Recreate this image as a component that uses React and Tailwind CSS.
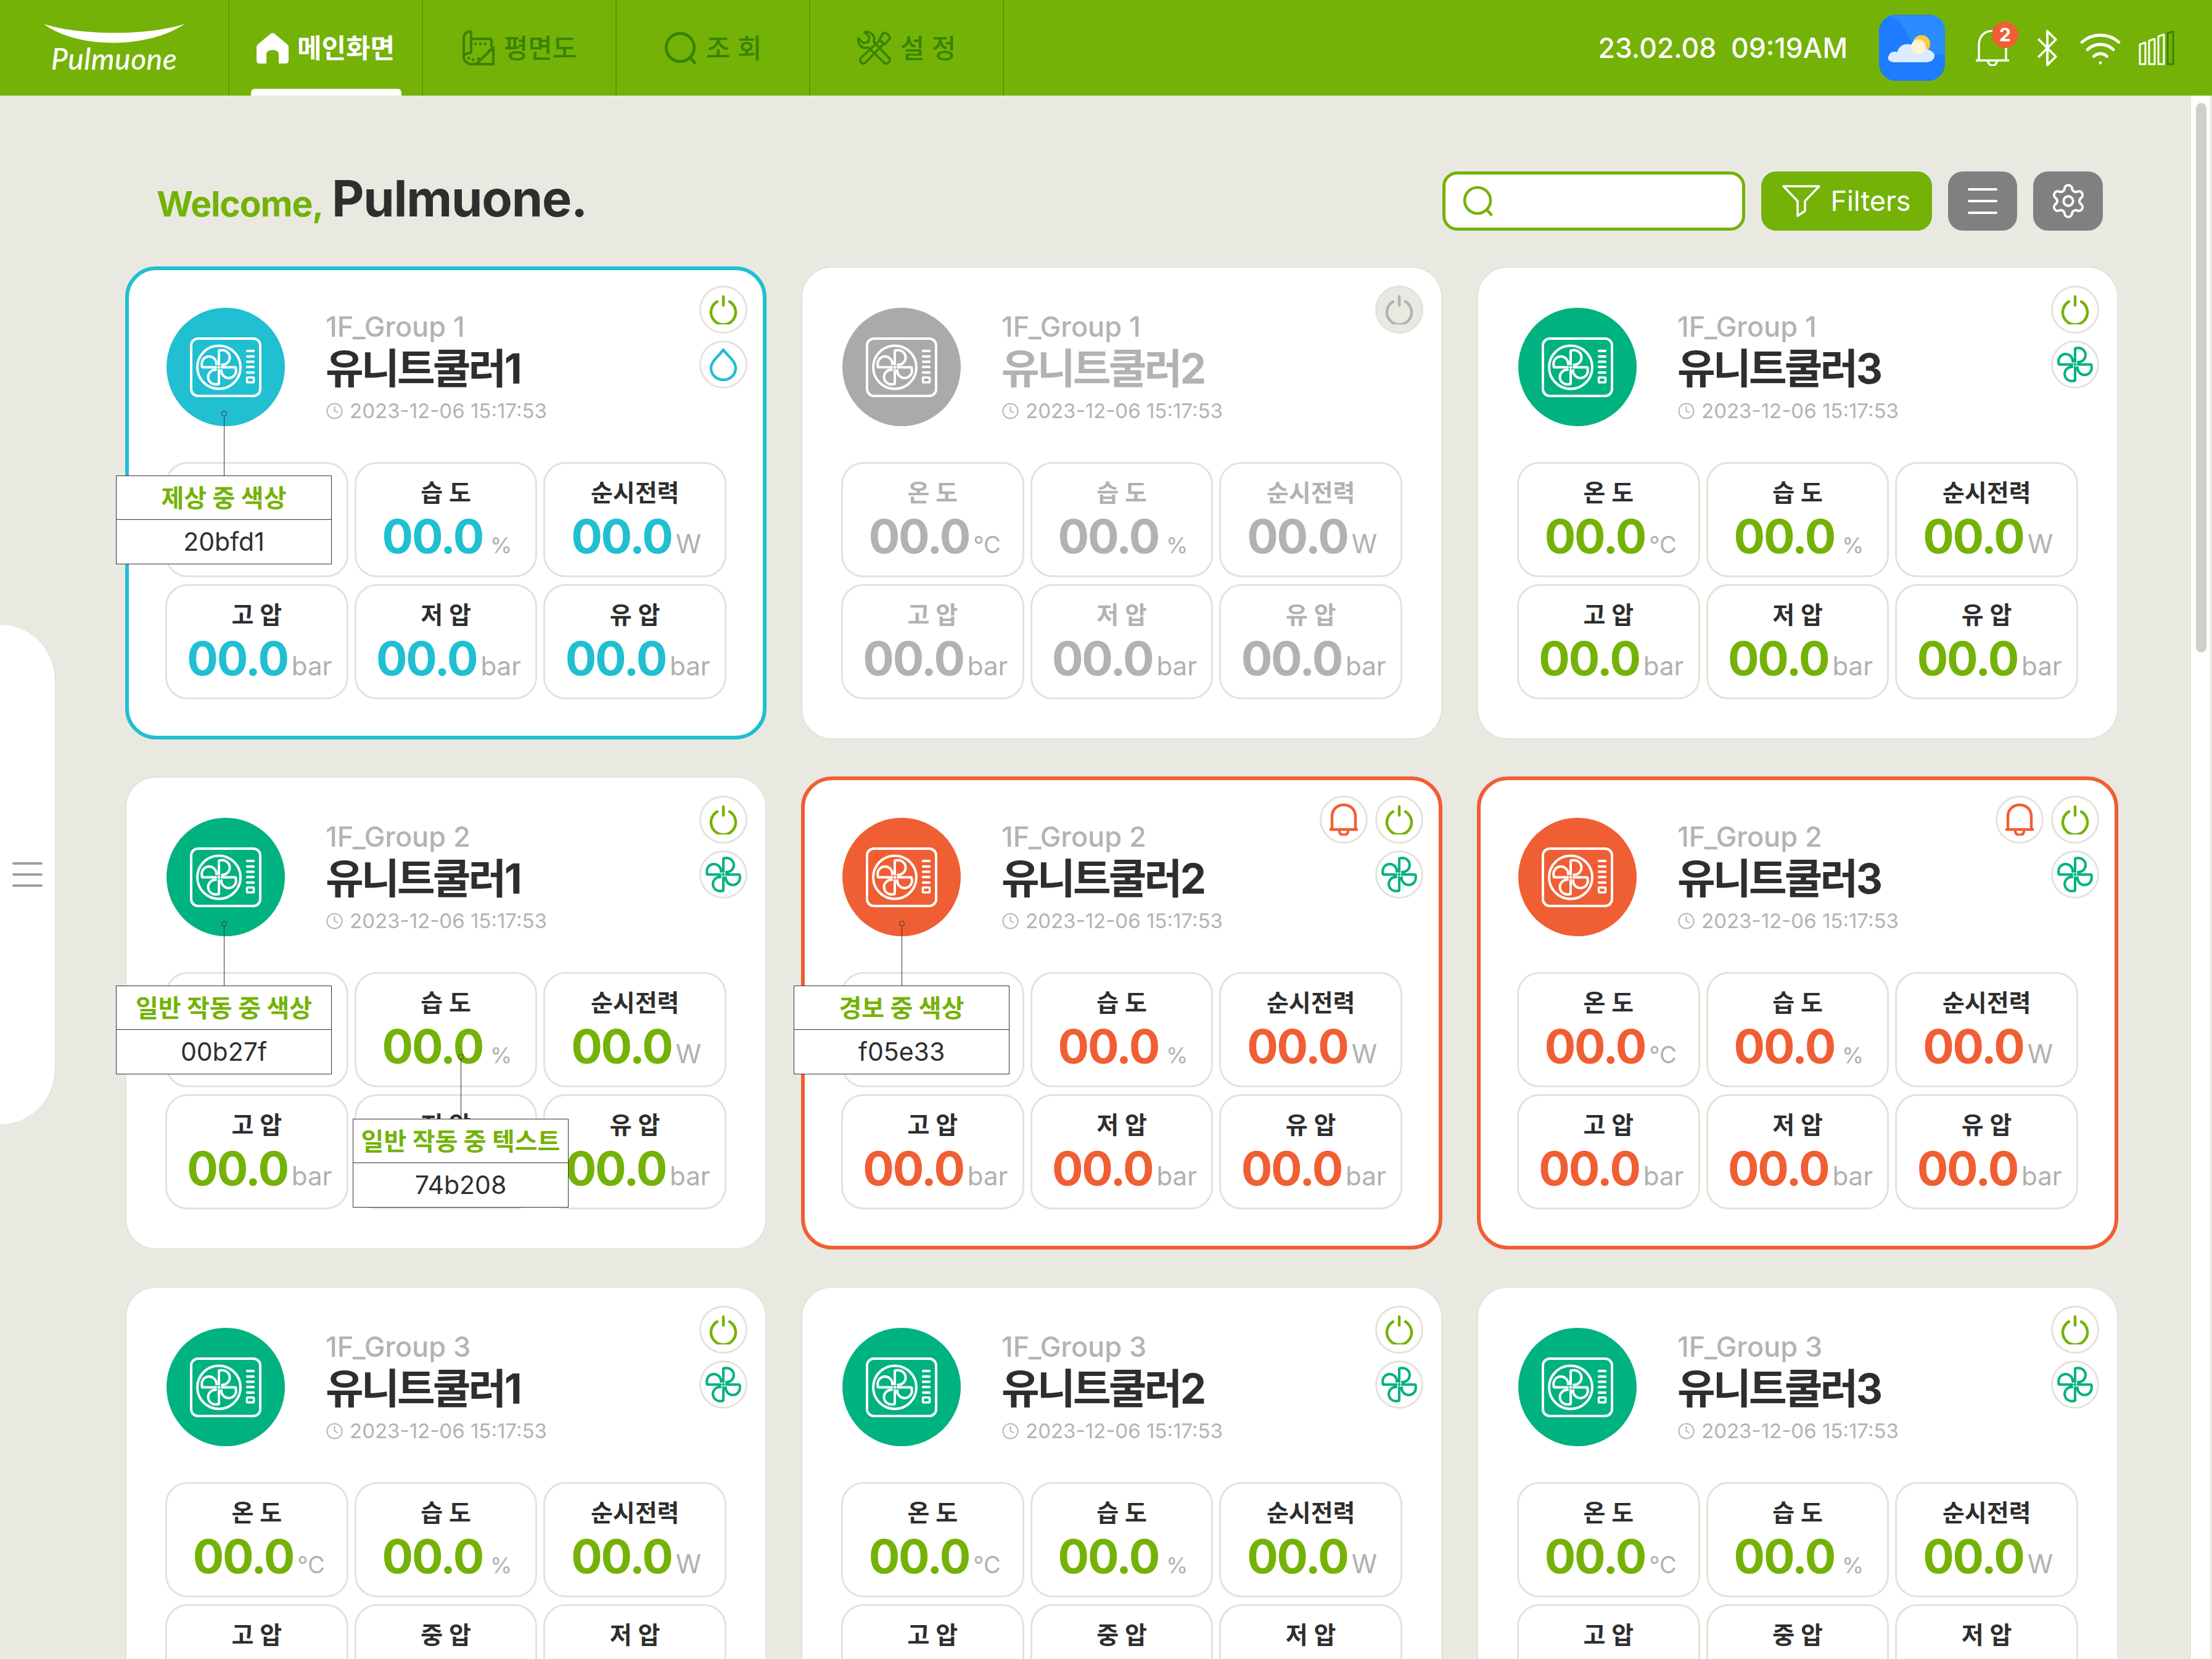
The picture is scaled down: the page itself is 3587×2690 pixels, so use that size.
import React from 'react';
import { Settings, Clock, Bluetooth, Wifi } from 'lucide-react';

const tones = {
  cyan: {
    card: 'border-[6px] border-[#20bfd1] pt-[61px] pl-[59px]',
    btns: 'top-[25px] right-[25px]',
    circle: 'bg-[#20bfd1]',
    value: 'text-[#20bfd1]',
    label: 'text-[#2e2e2e]',
    title: 'text-[#2e2e2e]',
  },
  green: {
    card: 'border-2 border-[#e3e3d8] pt-[65px] pl-[63px]',
    btns: 'top-[29px] right-[29px]',
    circle: 'bg-[#00b27f]',
    value: 'text-[#74b208]',
    label: 'text-[#2e2e2e]',
    title: 'text-[#2e2e2e]',
  },
  red: {
    card: 'border-[6px] border-[#f05e33] pt-[61px] pl-[59px]',
    btns: 'top-[25px] right-[25px]',
    circle: 'bg-[#f05e33]',
    value: 'text-[#f05e33]',
    label: 'text-[#2e2e2e]',
    title: 'text-[#2e2e2e]',
  },
  off: {
    card: 'border-2 border-[#e3e3d8] pt-[65px] pl-[63px]',
    btns: 'top-[29px] right-[29px]',
    circle: 'bg-[#aaaaaa]',
    value: 'text-[#b2b2b2]',
    label: 'text-[#b2b2b2]',
    title: 'text-[#b2b2b2]',
  },
};

const unitStyles = {
  '°C': { row: 'ml-[7px]', text: 'text-[38px]' },
  '%': { row: 'ml-[4px]', text: 'ml-[6px] text-[36px]' },
  W: { row: 'ml-[4px]', text: 'text-[42px]' },
  bar: { row: 'ml-[9px]', text: 'text-[42px]' },
};

const metricsA = [
  { label: '온 도', unit: '°C' },
  { label: '습 도', unit: '%' },
  { label: '순시전력', unit: 'W' },
  { label: '고 압', unit: 'bar' },
  { label: '저 압', unit: 'bar' },
  { label: '유 압', unit: 'bar' },
];

const metricsB = [
  { label: '온 도', unit: '°C' },
  { label: '습 도', unit: '%' },
  { label: '순시전력', unit: 'W' },
  { label: '고 압', unit: 'bar' },
  { label: '중 압', unit: 'bar' },
  { label: '저 압', unit: 'bar' },
];

const cards = [
  { group: '1F_Group 1', name: '유니트쿨러1', tone: 'cyan', second: 'drop' },
  { group: '1F_Group 1', name: '유니트쿨러2', tone: 'off' },
  { group: '1F_Group 1', name: '유니트쿨러3', tone: 'green', second: 'fan' },
  { group: '1F_Group 2', name: '유니트쿨러1', tone: 'green', second: 'fan' },
  { group: '1F_Group 2', name: '유니트쿨러2', tone: 'red', second: 'fan', bell: true },
  { group: '1F_Group 2', name: '유니트쿨러3', tone: 'red', second: 'fan', bell: true },
  { group: '1F_Group 3', name: '유니트쿨러1', tone: 'green', second: 'fan', metrics: metricsB },
  { group: '1F_Group 3', name: '유니트쿨러2', tone: 'green', second: 'fan', metrics: metricsB },
  { group: '1F_Group 3', name: '유니트쿨러3', tone: 'green', second: 'fan', metrics: metricsB },
];

const Petals = ({ sw = 4 }) => (
  <g fill="none" stroke="currentColor" strokeWidth={sw} strokeLinejoin="round" strokeLinecap="round">
    {[0, 90, 180, 270].map((r) => (
      <path key={r} transform={`rotate(${r})`} d="M0 -5V-26Q0 -28 3 -27.5A11.9 11.9 0 1 1 5 -4" />
    ))}
    <circle r="1.5" strokeWidth="2" />
  </g>
);

const FanIcon = () => (
  <svg width="58" height="58" viewBox="-30 -30 60 60" className="text-[#00b27f]">
    <Petals sw={4.2} />
  </svg>
);

const UnitIcon = () => (
  <svg width="118" height="99" viewBox="0 0 118 99" className="text-white">
    <rect x="3" y="3" width="112" height="93" rx="11" fill="none" stroke="currentColor" strokeWidth="4" />
    <circle cx="48" cy="49.5" r="35" fill="none" stroke="currentColor" strokeWidth="4" />
    <g transform="translate(48 49.5)">
      <Petals sw={4} />
    </g>
    <g fill="currentColor">
      <rect x="92" y="21" width="14" height="4" rx="1.5" />
      <rect x="92" y="30" width="14" height="4" rx="1.5" />
      <rect x="92" y="38.5" width="14" height="4" rx="1.5" />
      <rect x="92" y="47" width="14" height="4" rx="1.5" />
      <rect x="92" y="56" width="14" height="4" rx="1.5" />
    </g>
    <rect x="93.5" y="66" width="11" height="8" rx="1" fill="none" stroke="currentColor" strokeWidth="3.5" />
  </svg>
);

const PowerIcon = ({ off }) => (
  <svg width="46" height="48" viewBox="0 0 46 48" fill="none" stroke="currentColor" strokeWidth="4.4" strokeLinecap="round" className={off ? 'text-[#b2b2b2]' : 'text-[#74b208]'}>
    <path d="M13 11A20 20 0 1 0 33 11" />
    <path d="M23 3V17" />
  </svg>
);

const DropIcon = () => (
  <svg width="46" height="54" viewBox="0 0 46 54" fill="none" stroke="#20bfd1" strokeWidth="4.4" strokeLinejoin="round">
    <path d="M23 3C28 11 43 21 43 33A20 19 0 0 1 3 33C3 21 18 11 23 3Z" />
  </svg>
);

const BellIcon = () => (
  <svg width="46" height="52" viewBox="0 0 46 52" fill="none" stroke="#f05e33" strokeWidth="4.4" strokeLinecap="round">
    <path d="M4 42V21C4 10 12 2 23 2C34 2 42 10 42 21V42" />
    <path d="M1 42H45" />
    <path d="M16 45A7 6 0 0 0 30 45" />
  </svg>
);

const RoundBtn = ({ children, off }) => (
  <div className={`flex items-center justify-center w-[78px] h-[78px] rounded-full border-[3px] border-[#e3e3d8] ${off ? 'bg-[#e9e9e1]' : 'bg-white'}`}>
    {children}
  </div>
);

const Metric = ({ label, unit, tone }) => (
  <div className="flex flex-col items-center h-[187px] pt-[24px] rounded-[36px] border-[3px] border-[#e3e3d8]">
    <div className={`h-[46px] leading-[46px] text-[39px] font-semibold ${tone.label}`}>{label}</div>
    <div className={`mt-[8px] flex items-baseline justify-center gap-[6px] h-[80px] leading-[80px] ${unitStyles[unit].row}`}>
      <span className={`text-[75px] font-bold tracking-[-0.03em] ${tone.value}`}>00.0</span>
      <span className={`${unitStyles[unit].text} text-[#b0b0b0]`}>{unit}</span>
    </div>
  </div>
);

const Annotation = ({ className, title, value, stem = 'h-[96px]' }) => (
  <div className={`absolute z-10 flex flex-col items-center w-[350px] ${className}`}>
    <div className="w-[9px] h-[9px] rounded-full border-[1.5px] border-[#333333]" />
    <div className={`w-px bg-[#333333] ${stem}`} />
    <div className="w-full h-[144px] bg-white border-[1.5px] border-[#333333] flex flex-col">
      <div className="h-[71px] pt-[2px] flex items-center justify-center text-[#74b208] text-[40px] font-bold border-b-[1.5px] border-[#333333] whitespace-nowrap">{title}</div>
      <div className="flex-1 flex items-center justify-center text-[#2e2e2e] text-[41px]">{value}</div>
    </div>
  </div>
);

const Card = ({ group, name, tone, second, bell, metrics = metricsA, children }) => {
  const t = tones[tone];
  const off = tone === 'off';
  return (
    <div className={`relative h-[767px] bg-white rounded-[50px] ${t.card}`}>
      <div className="flex ml-[2px]">
        <div className={`flex items-center justify-center w-[192px] h-[192px] rounded-full ${t.circle}`}>
          <UnitIcon />
        </div>
        <div className="ml-[66px] pt-[8px]">
          <div className="h-[46px] leading-[46px] text-[45px] font-medium text-[#b3b3b3]">{group}</div>
          <div className={`mt-[6px] h-[78px] leading-[78px] text-[67px] font-bold tracking-[-0.055em] ${t.title}`}>{name}</div>
          <div className="mt-[5px] flex items-center gap-[10px] text-[33px] text-[#b3b3b3]">
            <Clock size={29} strokeWidth={1.6} />
            <span>2023-12-06 15:17:53</span>
          </div>
        </div>
      </div>
      <div className={`absolute flex flex-col items-end gap-[11px] ${t.btns}`}>
        <div className="flex gap-[12px]">
          {bell && <RoundBtn><BellIcon /></RoundBtn>}
          <RoundBtn off={off}><PowerIcon off={off} /></RoundBtn>
        </div>
        {second === 'fan' && <RoundBtn><FanIcon /></RoundBtn>}
        {second === 'drop' && <RoundBtn><DropIcon /></RoundBtn>}
      </div>
      <div className="mt-[57px] w-[910px] grid grid-cols-3 gap-x-[10px] gap-y-[11px]">
        {metrics.map((m) => (
          <Metric key={m.label} label={m.label} unit={m.unit} tone={t} />
        ))}
      </div>
      {children}
    </div>
  );
};

const NavItem = ({ icon, label, active }) => (
  <div className="relative w-[314px] h-full flex items-center justify-center gap-[14px] border-r-2 border-[#5c9a06]">
    {icon}
    <span className={`pt-[2px] text-[43px] font-bold ${active ? 'text-white' : 'font-medium text-[#388400]'}`}>{label}</span>
    {active && <div className="absolute bottom-0 left-[35px] w-[244px] h-[11px] bg-white rounded-t-[6px]" />}
  </div>
);

const HomeIcon = () => (
  <svg width="52" height="50" viewBox="0 0 52 50" fill="#ffffff">
    <path d="M23 1.5Q26 -0.5 29 1.5L50 19Q52 21 52 24V45Q52 50 47 50H36V36Q36 28 26 28Q16 28 16 36V50H5Q0 50 0 45V24Q0 21 2 19Z" />
  </svg>
);

const PlanIcon = () => (
  <svg width="54" height="58" viewBox="0 0 54 58" fill="none" stroke="#388400" strokeWidth="4" strokeLinecap="round" strokeLinejoin="round">
    <path d="M3 40V14Q3 3 13 2Q15 2 15 5V36Q5 38 3 42Q2 50 12 55H51V28L24 54" />
    <path d="M15 14H46Q48 14 48 16V26" />
    <path d="M22 22H22.1M30 22H30.1M38 22H38.1M44 33H44.1M11 45H11.1M18 48H18.1M27 46H27.1" strokeWidth="4.5" />
  </svg>
);

const SearchIcon = ({ color, size }) => (
  <svg width={size} height={size} viewBox="0 0 50 50" fill="none" stroke={color} strokeWidth="4.5" strokeLinecap="round">
    <circle cx="24" cy="24" r="21" />
    <path d="M39 39L46 47" />
  </svg>
);

const ToolIcon = () => (
  <svg width="56" height="56" viewBox="0 0 56 56" fill="none" stroke="#388400" strokeWidth="3.6" strokeLinejoin="round">
    <path d="M12 2L20 10L18 18L10 20L2 12C0 22 8 30 18 27L44 52C48 56 56 48 52 44L27 18C30 8 22 0 12 2Z" />
    <path d="M42 4C46 0 56 10 52 14L44 22L36 14Z" />
    <path d="M36 16L6 44C2 48 8 56 13 52L42 22" />
  </svg>
);

const WeatherIcon = () => (
  <svg width="107" height="107" viewBox="0 0 107 107">
    <rect width="107" height="107" rx="27" fill="#1f7bff" />
    <path d="M14 1H80Q107 1 107 27V64C90 66 72 68 56 48C44 32 40 8 14 1Z" fill="#2b8cff" />
    <circle cx="69" cy="47" r="14" fill="#ffc93c" />
    <path d="M26 77C16 77 12 71 16 66C18 60 23 59 30 60C32 50 42 46 50 48C56 50 62 48 70 54C80 55 90 60 90 66C90 73 84 77 76 77Z" fill="#dcebff" />
    <circle cx="64" cy="52" r="12" fill="#fff3d8" />
  </svg>
);

const SignalIcon = () => (
  <svg width="58" height="56" viewBox="0 0 58 56" fill="none" strokeWidth="3" strokeLinejoin="round">
    <path d="M2 22L11 19V54H2Z" stroke="#ffffff" />
    <path d="M17 16L26 13V54H17Z" stroke="#ffffff" />
    <path d="M32 9L41 6V54H32Z" stroke="#ffffff" />
    <path d="M47 4L56 1V54H47Z" stroke="#388400" />
  </svg>
);

const App = () => (
  <div className="w-[3587px] h-[2690px] overflow-hidden relative flex flex-col bg-[#e9e9e1] font-['Inter','Noto_Sans_CJK_KR',sans-serif]">
    <header className="flex items-stretch h-[155px] bg-[#74b208] shrink-0">
      <div className="w-[372px] flex flex-col items-center pt-[39px] border-r-2 border-[#5c9a06]">
        <svg width="228" height="31" viewBox="0 0 228 31" fill="#ffffff">
          <path d="M0 0C60 19 168 19 228 0C170 40 55 41 0 0Z" />
        </svg>
        <span className="-mt-[5px] text-white text-[48px] italic font-medium font-['Lato',sans-serif] tracking-[0.01em] leading-[60px]">Pulmuone</span>
      </div>
      <NavItem active icon={<HomeIcon />} label="메인화면" />
      <NavItem icon={<PlanIcon />} label="평면도" />
      <NavItem icon={<SearchIcon color="#388400" size={54} />} label="조 회" />
      <NavItem icon={<ToolIcon />} label="설 정" />
      <div className="flex-1 flex items-center justify-end pr-[61px]">
        <span className="mt-[2px] text-white text-[44.5px] font-medium mr-[51px] whitespace-pre">23.02.08  09:19AM</span>
        <WeatherIcon />
        <div className="relative ml-[50px] w-[54px] h-[58px]">
          <svg width="54" height="58" viewBox="0 0 54 58" fill="none" stroke="#ffffff" strokeWidth="3.5" strokeLinecap="round">
            <path d="M5 49V24C5 10 14 1 27 1C40 1 49 10 49 24V49" />
            <path d="M1 49H53" />
            <path d="M20 51A7 6 0 0 0 34 51" />
          </svg>
          <div className="absolute -top-[14px] left-[26px] w-[43px] h-[43px] rounded-full bg-[#f05e33] flex items-center justify-center text-white text-[30px] font-bold">2</div>
        </div>
        <Bluetooth className="ml-[29px] text-white" size={66} strokeWidth={1.4} />
        <Wifi className="ml-[17px] text-white" size={72} strokeWidth={1.6} />
        <div className="ml-[26px]"><SignalIcon /></div>
      </div>
    </header>

    <div className="flex-1 flex min-h-0">
      <main className="flex-1 pl-[203px] pr-[116px] pt-[123px] min-w-0">
        <div className="flex items-stretch h-[96px] mb-[58px] pl-[51px] pr-[25px]">
          <div className="flex items-baseline self-end mb-[7px]">
            <span className="text-[57px] font-bold text-[#74b208] leading-[73px] tracking-[-0.02em]">Welcome,</span>
            <span className="ml-[14px] text-[81px] font-bold text-[#2e2e2e] leading-[73px] tracking-[-0.015em]">Pulmuone.</span>
          </div>
          <div className="ml-auto flex gap-[26px]">
            <div className="w-[491px] flex items-center pl-[28px] bg-white border-[5px] border-[#74b208] rounded-[24px]">
              <SearchIcon color="#74b208" size={50} />
            </div>
            <div className="w-[277px] flex items-center justify-center gap-[16px] bg-[#74b208] rounded-[24px] text-white text-[45px]">
              <svg width="62" height="52" viewBox="0 0 62 52" fill="none" stroke="#ffffff" strokeWidth="3.5" strokeLinejoin="round">
                <path d="M2 2H60L37 26V42L25 50V26Z" />
              </svg>
              <span>Filters</span>
            </div>
            <div className="w-[112px] flex flex-col items-center justify-center gap-[15px] bg-[#808080] rounded-[24px]">
              <div className="w-[48px] h-[4px] bg-white rounded-full" />
              <div className="w-[48px] h-[4px] bg-white rounded-full" />
              <div className="w-[48px] h-[4px] bg-white rounded-full" />
            </div>
            <div className="w-[113px] flex items-center justify-center bg-[#808080] rounded-[24px]">
              <Settings className="text-white" size={62} strokeWidth={1.5} />
            </div>
          </div>
        </div>

        <div className="grid grid-cols-3 gap-x-[56px] gap-y-[60px]">
          {cards.map((c, i) => (
            <Card key={i} {...c}>
              {i === 0 && <Annotation className="left-[-21px] top-[228px]" title="제상 중 색상" value="20bfd1" />}
              {i === 3 && <Annotation className="left-[-17px] top-[232px]" title="일반 작동 중 색상" value="00b27f" />}
              {i === 3 && <Annotation className="left-[367px] top-[448px]" title="일반 작동 중 텍스트" value="74b208" />}
              {i === 4 && <Annotation className="left-[-18px] top-[228px]" title="경보 중 색상" value="f05e33" />}
            </Card>
          ))}
        </div>
      </main>

      <aside className="w-[33px] mr-[3px] shrink-0 bg-white pl-[8px] pt-[12px] border-l-2 border-[#e3e3d8]">
        <div className="w-[17px] h-[891px] bg-[#d0d0c8] rounded-full" />
      </aside>
    </div>

    <div className="absolute left-0 top-[1013px] w-[91px] h-[810px] bg-white rounded-r-[90px] border-r-2 border-[#e3e3d8] flex flex-col items-center justify-center gap-[14px]">
      <div className="w-[49px] h-[4px] bg-[#a0a0a0] rounded-full" />
      <div className="w-[49px] h-[4px] bg-[#a0a0a0] rounded-full" />
      <div className="w-[49px] h-[4px] bg-[#a0a0a0] rounded-full" />
    </div>
  </div>
);

export default App;
